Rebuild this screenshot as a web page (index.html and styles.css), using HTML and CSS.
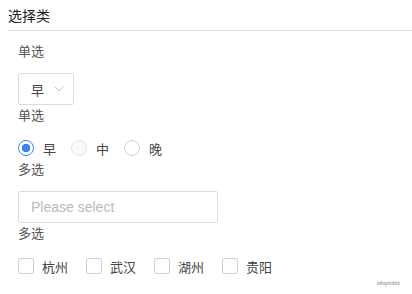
FILE: index.html
```html
<!DOCTYPE html>
<html lang="zh">
<head>
    <meta charset="UTF-8">
    <title>选择类</title>
    <link rel="stylesheet" href="styles.css">
</head>
<body>
    <div class="panel">
        <h2 class="panel-title">选择类</h2>
        <div class="panel-body">
            <div class="form-item">
                <label class="form-label">单选</label>
                <div class="select">
                    <span class="select-value">早</span>
                    <svg class="select-arrow" width="10" height="6" viewBox="0 0 10 6"><path d="M0.5 0.5 L5 5 L9.5 0.5" fill="none" stroke="#c4c4c4" stroke-width="1"/></svg>
                </div>
            </div>
            <div class="form-item">
                <label class="form-label">单选</label>
                <div class="radio-group">
                    <label class="radio checked"><span class="radio-dot"></span>早</label>
                    <label class="radio disabled"><span class="radio-dot"></span>中</label>
                    <label class="radio"><span class="radio-dot"></span>晚</label>
                </div>
            </div>
            <div class="form-item">
                <label class="form-label">多选</label>
                <div class="input">Please select</div>
            </div>
            <div class="form-item">
                <label class="form-label">多选</label>
                <div class="checkbox-group">
                    <label class="checkbox"><span class="checkbox-box"></span>杭州</label>
                    <label class="checkbox"><span class="checkbox-box"></span>武汉</label>
                    <label class="checkbox"><span class="checkbox-box"></span>湖州</label>
                    <label class="checkbox"><span class="checkbox-box"></span>贵阳</label>
                </div>
            </div>
        </div>
    </div>
    <div class="watermark">adaptable</div>
</body>
</html>
```

FILE: styles.css
```css
* {
    margin: 0;
    padding: 0;
    box-sizing: border-box;
}

body {
    font-family: "Noto Sans CJK SC", "Noto Sans", sans-serif;
    background-color: #fff;
    color: #555;
    font-size: 13px;
    width: 412px;
    height: 294px;
    overflow: hidden;
    position: relative;
}

.panel {
    padding-left: 8px;
}

.panel-title {
    font-size: 14px;
    font-weight: 400;
    color: #222;
    line-height: 20px;
    padding-top: 5px;
    padding-bottom: 5px;
    border-bottom: 1px solid #d9d9d9;
}

.panel-body {
    padding: 10px 0 0 10px;
}

.form-label {
    display: block;
    line-height: 20px;
    color: #555;
}

.form-item .select,
.form-item .input {
    margin-top: 12px;
}

.select {
    display: flex;
    align-items: center;
    gap: 10px;
    width: 56px;
    height: 32px;
    padding-left: 12px;
    border: 1px solid #dcdcdc;
    border-radius: 2px;
    color: #444;
}

.radio-group,
.checkbox-group {
    display: flex;
    align-items: center;
    height: 22px;
    margin-top: 12px;
}

.radio {
    display: flex;
    align-items: center;
    gap: 9px;
    margin-right: 15px;
    color: #444;
}

.radio-dot {
    width: 16px;
    height: 16px;
    border: 1px solid #d0d0d0;
    border-radius: 50%;
    background: #fff;
}

.radio.checked .radio-dot {
    border-color: #3b82f6;
    background: radial-gradient(circle, #3b82f6 0 4px, #fff 4.5px);
}

.radio.disabled .radio-dot {
    border-color: #e4e4e4;
    background: #fafafa;
}

.input {
    width: 200px;
    height: 32px;
    padding-left: 12px;
    line-height: 30px;
    border: 1px solid #dcdcdc;
    border-radius: 2px;
    color: #bbb;
    font-family: "Liberation Sans", Arial, sans-serif;
    font-size: 14px;
}

.checkbox {
    display: flex;
    align-items: center;
    gap: 8px;
    margin-right: 18px;
    color: #444;
}

.checkbox-box {
    width: 16px;
    height: 16px;
    border: 1px solid #d0d0d0;
    border-radius: 2px;
}

.watermark {
    position: absolute;
    right: 12px;
    bottom: 8px;
    font-size: 5px;
    color: #888;
}
```
